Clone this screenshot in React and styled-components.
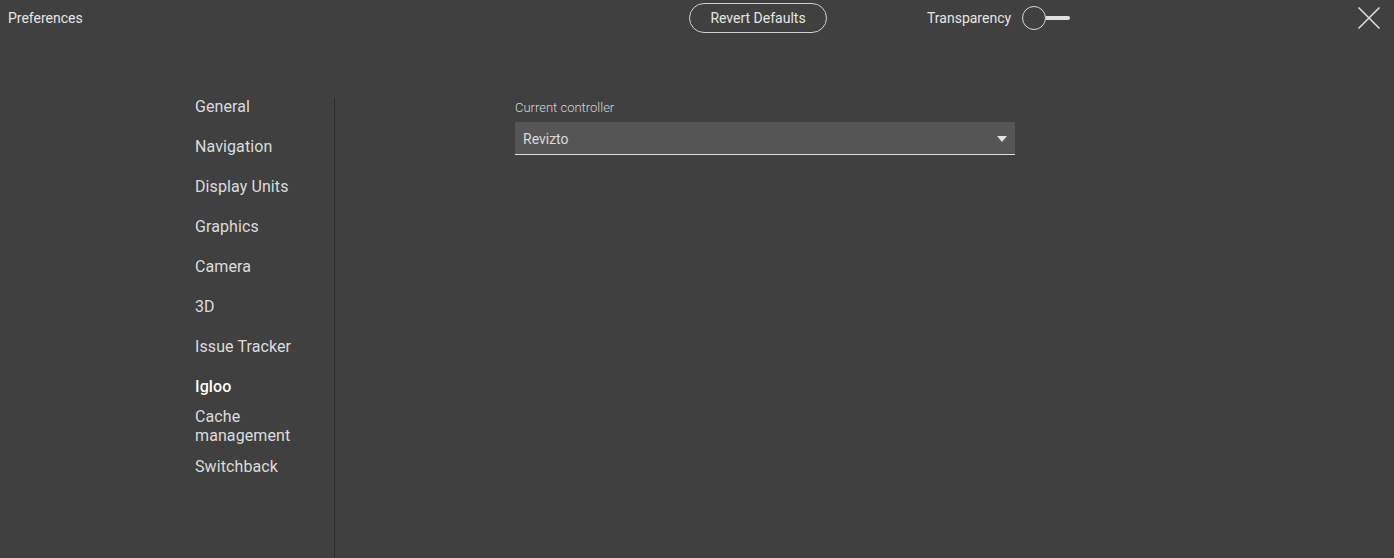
import React from "react";
import styled, { createGlobalStyle } from "styled-components";

const Global = createGlobalStyle`
  html, body { margin: 0; padding: 0; background: #404040; }
  body { font-family: Roboto, "Liberation Sans", sans-serif; color: #e0e0e0; }
  * { box-sizing: border-box; }
`;

const Page = styled.div`
  height: 100vh;
  display: flex;
  flex-direction: column;
  background: #404040;
  overflow: hidden;
`;

const Header = styled.header`
  height: 36px;
  display: flex;
  align-items: center;
  padding-left: 8px;
  padding-right: 14px;
`;

const Title = styled.div`
  width: 681px;
  font-size: 14px;
  color: #e6e6e6;
`;

const RevertButton = styled.button`
  width: 138px;
  height: 30px;
  border: 1px solid #cfcfcf;
  border-radius: 15px;
  background: transparent;
  color: #e6e6e6;
  font-family: inherit;
  font-size: 14px;
  padding: 0;
  cursor: pointer;
`;

const ToggleGroup = styled.div`
  margin-left: 100px;
  display: flex;
  align-items: center;
  gap: 11px;
  font-size: 14px;
  color: #e6e6e6;
`;

const Toggle = styled.div`
  display: flex;
  align-items: center;
`;

const Knob = styled.div`
  width: 24px;
  height: 24px;
  border-radius: 50%;
  border: 1.5px solid #d8d8d8;
`;

const Track = styled.div`
  width: 24px;
  height: 4px;
  background: #e0e0e0;
  border-radius: 0 2px 2px 0;
`;

const Close = styled.button`
  margin-left: auto;
  width: 22px;
  height: 22px;
  padding: 0;
  border: none;
  background: transparent;
  display: flex;
  align-items: center;
  justify-content: center;
  cursor: pointer;
`;

const Main = styled.main`
  flex: 1;
  display: flex;
`;

const Sidebar = styled.nav`
  margin-left: 195px;
  width: 139px;
  padding-top: 50px;
  display: flex;
  flex-direction: column;
`;

const NavItem = styled.div`
  min-height: 40px;
  display: flex;
  align-items: center;
  font-size: 16px;
  line-height: 19px;
  letter-spacing: 0.1px;
  color: ${(p) => (p.$active ? "#ffffff" : "#dcdcdc")};
  font-weight: ${(p) => (p.$active ? 500 : 400)};
  cursor: pointer;
`;

const Divider = styled.div`
  width: 1px;
  margin-top: 62px;
  background: #2c2c2c;
`;

const Content = styled.section`
  padding-left: 180px;
  padding-top: 64px;
`;

const Label = styled.div`
  font-size: 13px;
  line-height: 15px;
  font-weight: 300;
  color: #d6d6d6;
  margin-bottom: 7px;
`;

const Select = styled.div`
  width: 500px;
  height: 33px;
  background: #555555;
  border-bottom: 1px solid #dedede;
  display: flex;
  align-items: center;
  justify-content: space-between;
  padding: 2px 8px 0 8px;
  font-size: 14px;
  color: #dadada;
`;

const Arrow = styled.div`
  width: 0;
  height: 0;
  border-left: 5px solid transparent;
  border-right: 5px solid transparent;
  border-top: 6px solid #e0e0e0;
`;

const items = [
  "General",
  "Navigation",
  "Display Units",
  "Graphics",
  "Camera",
  "3D",
  "Issue Tracker",
  "Igloo",
  "Cache management",
  "Switchback",
];

export default function App() {
  return (
    <Page>
      <Global />
      <Header>
        <Title>Preferences</Title>
        <RevertButton>Revert Defaults</RevertButton>
        <ToggleGroup>
          Transparency
          <Toggle>
            <Knob />
            <Track />
          </Toggle>
        </ToggleGroup>
        <Close aria-label="Close">
          <svg width="22" height="22" viewBox="0 0 22 22">
            <path d="M0.5 0.5 L21.5 21.5 M21.5 0.5 L0.5 21.5" stroke="#e0e0e0" strokeWidth="1.5" />
          </svg>
        </Close>
      </Header>
      <Main>
        <Sidebar>
          {items.map((it) => (
            <NavItem key={it} $active={it === "Igloo"}>
              {it === "Cache management" ? (
                <span>
                  Cache
                  <br />
                  management
                </span>
              ) : (
                it
              )}
            </NavItem>
          ))}
        </Sidebar>
        <Divider />
        <Content>
          <Label>Current controller</Label>
          <Select>
            <span>Revizto</span>
            <Arrow />
          </Select>
        </Content>
      </Main>
    </Page>
  );
}
